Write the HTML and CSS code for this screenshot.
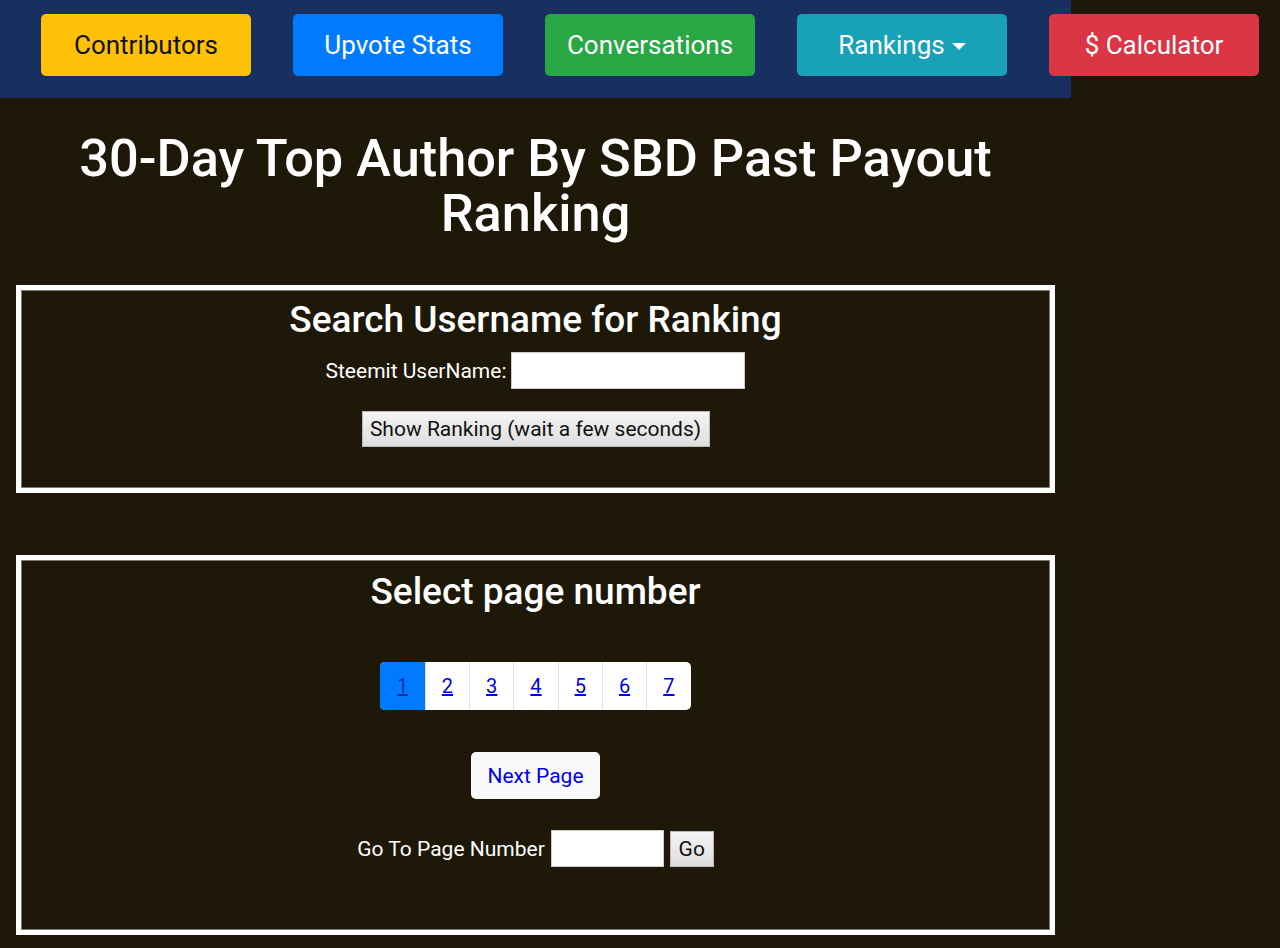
FILE: index.html
```html
<!DOCTYPE html>
<html lang="en">
<head>
    <meta charset="UTF-8">
    <meta name="viewport" content="width=device-width, initial-scale=1.0">
    <title>30-Day Top Author By SBD Past Payout Ranking</title>
    <link rel="stylesheet" href="styles.css">
</head>
<body>
    <div class="pagina">
        <nav class="menu">
            <a class="btn btn-amarelo" href="#">Contributors</a>
            <a class="btn btn-azul" href="#">Upvote Stats</a>
            <a class="btn btn-verde" href="#">Conversations</a>
            <a class="btn btn-ciano" href="#">Rankings <span class="seta"></span></a>
            <a class="btn btn-vermelho" href="#">$ Calculator</a>
        </nav>

        <h1>30-Day Top Author By SBD Past Payout Ranking</h1>

        <!-- Busca por usuario -->
        <div class="caixa caixa-busca">
            <h2>Search Username for Ranking</h2>
            <form class="linha">
                <label for="usuario">Steemit UserName:</label>
                <input type="text" id="usuario" class="campo-usuario">
            </form>
            <button class="botao-cinza botao-ranking">Show Ranking (wait a few seconds)</button>
        </div>

        <!-- Paginacao -->
        <div class="caixa caixa-paginas">
            <h2>Select page number</h2>
            <ul class="paginacao">
                <li class="ativo"><a href="#">1</a></li>
                <li><a href="#">2</a></li>
                <li><a href="#">3</a></li>
                <li><a href="#">4</a></li>
                <li><a href="#">5</a></li>
                <li><a href="#">6</a></li>
                <li><a href="#">7</a></li>
            </ul>
            <a class="proxima" href="#">Next Page</a>
            <form class="linha">
                <label for="pagina">Go To Page Number</label>
                <input type="text" id="pagina" class="campo-pagina">
                <button class="botao-cinza botao-go" type="button">Go</button>
            </form>
        </div>
    </div>
</body>
</html>
```

FILE: styles.css
```css
* {
    margin: 0;
    padding: 0;
    box-sizing: border-box;
}

body {
    background-color: #1d1807;
    font-family: Roboto, "Liberation Sans", sans-serif;
    color: #fff;
    min-height: 100vh;
}

.pagina {
    width: 1071px;
}

/* Barra de navegacao */
.menu {
    background-color: #17305f;
    height: 98px;
    display: flex;
    gap: 42px;
    padding: 14px 0 0 41px;
}

.btn {
    flex-shrink: 0;
    width: 210px;
    height: 62px;
    display: flex;
    justify-content: center;
    align-items: center;
    gap: 7px;
    border-radius: 5px;
    font-size: 26px;
    color: #fff;
    text-decoration: none;
}

.btn-amarelo { background-color: #ffc107; color: #111; }
.btn-azul { background-color: #007bff; }
.btn-verde { background-color: #28a745; }
.btn-ciano { background-color: #17a2b8; }
.btn-vermelho { background-color: #dc3545; }

.seta {
    width: 0;
    height: 0;
    border-left: 7px solid transparent;
    border-right: 7px solid transparent;
    border-top: 7px solid #fff;
    margin-top: 2px;
}

h1 {
    text-align: center;
    font-size: 52.3px;
    font-weight: 500;
    line-height: 55px;
    padding: 33px 40px 44px;
}

/* Caixas com borda branca */
.caixa {
    margin: 0 16px;
    border: 5px solid #fff;
    box-shadow: inset 0 0 0 1px #7b7b74;
    display: flex;
    flex-direction: column;
    align-items: center;
}

.caixa h2 {
    font-size: 37px;
    font-weight: 500;
    line-height: 43px;
}

.caixa-busca {
    height: 208px;
    padding-top: 8px;
}

.caixa-paginas {
    height: 380px;
    margin-top: 62px;
    padding-top: 10px;
}

.linha {
    display: flex;
    align-items: center;
    gap: 5px;
    font-size: 21px;
}

.caixa-busca .linha {
    margin-top: 11px;
}

.campo-usuario {
    width: 234px;
    height: 37px;
    border: 1px solid #ccc;
    background: #fff;
}

.botao-cinza {
    font-family: Roboto, "Liberation Sans", sans-serif;
    font-size: 21px;
    color: #111;
    background: linear-gradient(#f4f4f4, #dedede);
    border: 1px solid #b9b9b9;
}

.botao-ranking {
    margin-top: 22px;
    width: 348px;
    height: 36px;
}

/* Paginacao */
.paginacao {
    list-style: none;
    display: flex;
    margin-top: 49px;
    border-radius: 5px;
    overflow: hidden;
    background: #fff;
}

.paginacao li {
    width: 44.3px;
    height: 48px;
    display: flex;
    justify-content: center;
    align-items: center;
    border-left: 1px solid #dee2e6;
    font-size: 20px;
}

.paginacao li:first-child {
    border-left: none;
}

.paginacao li.ativo {
    background-color: #007bff;
}

.paginacao a {
    color: #0000ee;
}

.paginacao li.ativo a {
    color: #0b2fa5;
}

.proxima {
    margin-top: 42px;
    width: 129px;
    height: 47px;
    background-color: #f8f9fa;
    border-radius: 5px;
    display: flex;
    justify-content: center;
    align-items: center;
    font-size: 21px;
    color: #0000ee;
    text-decoration: none;
}

.caixa-paginas .linha {
    margin-top: 31px;
    gap: 6px;
}

.campo-pagina {
    width: 113px;
    height: 37px;
    border: 1px solid #ccc;
    background: #fff;
}

.botao-go {
    width: 44px;
    height: 36px;
}
```
